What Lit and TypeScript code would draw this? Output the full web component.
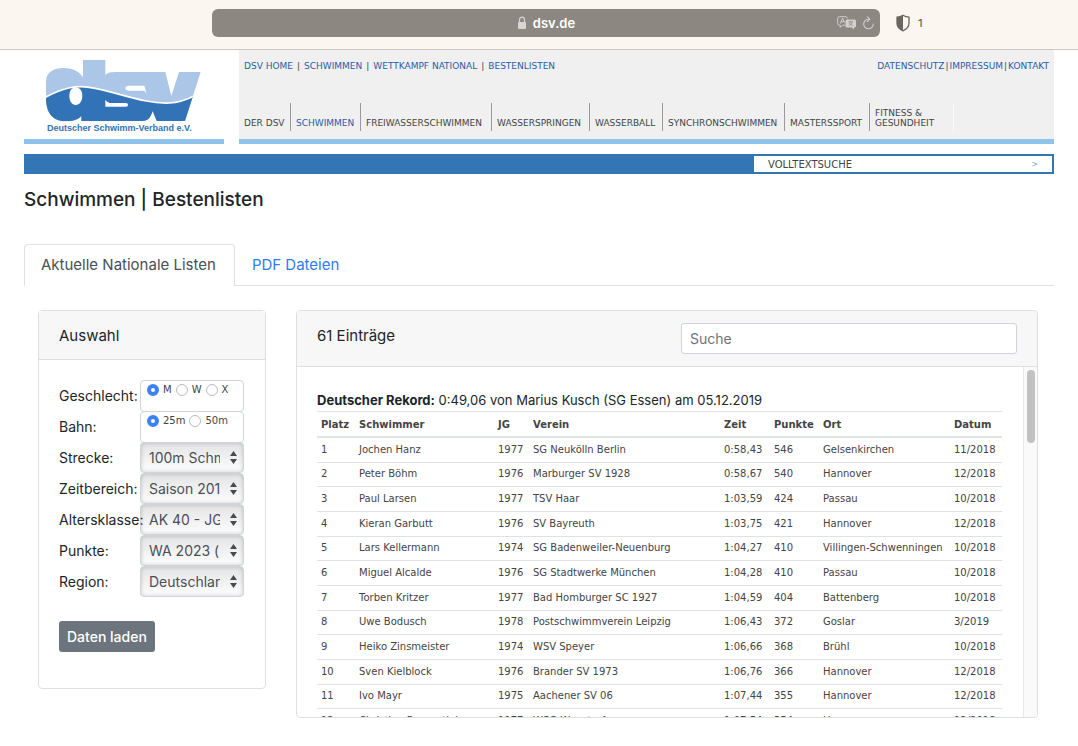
import { LitElement, html, css, svg } from "lit";
import { customElement, state } from "lit/decorators.js";
import { classMap } from "lit/directives/class-map.js";

type Row = [number, string, number, string, string, number, string, string];

const ROWS: Row[] = [
  [1, "Jochen Hanz", 1977, "SG Neukölln Berlin", "0:58,43", 546, "Gelsenkirchen", "11/2018"],
  [2, "Peter Böhm", 1976, "Marburger SV 1928", "0:58,67", 540, "Hannover", "12/2018"],
  [3, "Paul Larsen", 1977, "TSV Haar", "1:03,59", 424, "Passau", "10/2018"],
  [4, "Kieran Garbutt", 1976, "SV Bayreuth", "1:03,75", 421, "Hannover", "12/2018"],
  [5, "Lars Kellermann", 1974, "SG Badenweiler-Neuenburg", "1:04,27", 410, "Villingen-Schwenningen", "10/2018"],
  [6, "Miguel Alcalde", 1976, "SG Stadtwerke München", "1:04,28", 410, "Passau", "10/2018"],
  [7, "Torben Kritzer", 1977, "Bad Homburger SC 1927", "1:04,59", 404, "Battenberg", "10/2018"],
  [8, "Uwe Bodusch", 1978, "Postschwimmverein Leipzig", "1:06,43", 372, "Goslar", "3/2019"],
  [9, "Heiko Zinsmeister", 1974, "WSV Speyer", "1:06,66", 368, "Brühl", "10/2018"],
  [10, "Sven Kielblock", 1976, "Brander SV 1973", "1:06,76", 366, "Hannover", "12/2018"],
  [11, "Ivo Mayr", 1975, "Aachener SV 06", "1:07,44", 355, "Hannover", "12/2018"],
  [12, "Christian Rosenstiel", 1977, "WSG Wunstorf", "1:07,54", 354, "Hannover", "12/2018"],
];

const COLUMNS = ["Platz", "Schwimmer", "JG", "Verein", "Zeit", "Punkte", "Ort", "Datum"];
const CRUMBS = ["DSV HOME", "SCHWIMMEN", "WETTKAMPF NATIONAL", "BESTENLISTEN"];
const SERVICE = ["DATENSCHUTZ", "IMPRESSUM", "KONTAKT"];
const NAV = [
  "DER DSV", "SCHWIMMEN", "FREIWASSERSCHWIMMEN", "WASSERSPRINGEN",
  "WASSERBALL", "SYNCHRONSCHWIMMEN", "MASTERSSPORT", "FITNESS & GESUNDHEIT",
];
const SELECTS = [
  { id: "strecke", label: "Strecke:", value: "100m Schmetterling" },
  { id: "zeit", label: "Zeitbereich:", value: "Saison 2018/2019" },
  { id: "ak", label: "Altersklasse:", value: "AK 40 - JG 1978-1974" },
  { id: "punkte", label: "Punkte:", value: "WA 2023 (25m)" },
  { id: "region", label: "Region:", value: "Deutschland" },
];

@customElement("browser-bar")
class BrowserBar extends LitElement {
  static styles = css`
    :host {
      display: grid;
      grid-template-columns: 212fr 668fr 198fr;
      align-items: center;
      height: 49px;
      padding-bottom: 3px;
      box-sizing: border-box;
      background: #fcf6f1;
      box-shadow: 0 1px #cbc7c4;
      margin-bottom: 1px;
      font-family: Inter, sans-serif;
    }
    .address {
      grid-column: 2;
      display: grid;
      grid-template-columns: 1fr auto 1fr;
      align-items: center;
      height: 28px;
      padding: 0 5px;
      border-radius: 6px;
      background: #8d8781;
      color: #fff;
      font-size: 13px;
      font-weight: 600;
    }
    .site { grid-column: 2; display: flex; align-items: center; gap: 6px; }
    .tools { display: flex; justify-content: flex-end; align-items: center; gap: 5px; }
    .shield { display: flex; align-items: center; gap: 7px; padding-left: 15px; font-size: 11px; font-weight: 500; color: #6b6660; }
    svg { display: block; }
  `;

  render() {
    return html`
      <div class="address">
        <span class="site">
          <svg width="10" height="14" viewBox="0 0 10 14">
            <path d="M2.500 6.500V4a2.500 2.800 0 0 1 5 0v2.500" fill="none" stroke="#d8d5d2" stroke-width="1.200" />
            <rect x="1" y="6" width="8" height="7" rx="1" fill="#d8d5d2" />
          </svg>
          dsv.de
        </span>
        <span class="tools">
          <svg width="20" height="14" viewBox="0 0 20 14">
            <path d="M8 9.200H5.500L3.200 11.500V9.200H2.500A1.800 1.800 0 0 1 .7 7.400V2.500A1.800 1.800 0 0 1 2.500.7h6A1.800 1.800 0 0 1 10.300 2.500" fill="none" stroke="#d2cfcc" />
            <path d="M3.300 7.500 5.600 2.200 7.600 6.500M4.100 5.800h3" fill="none" stroke="#d2cfcc" />
            <path d="M10 3.500h7.500A1.500 1.500 0 0 1 19 5v5a1.500 1.500 0 0 1-1.500 1.500H17V13.500L14.800 11.500H10A1.500 1.500 0 0 1 8.500 10V5A1.500 1.500 0 0 1 10 3.500Z" fill="#d2cfcc" />
            <path d="M11.500 5.800h4.500M13.700 4.800v1M12.200 6.300c.6 1.500 1.600 2.500 3.500 3.200M15.200 6.300c-.6 1.500-1.600 2.500-3.500 3.200" fill="none" stroke="#8d8781" stroke-width=".8" />
          </svg>
          <svg width="13" height="14" viewBox="0 0 13 14">
            <path d="M6.500 3.200A4.800 4.800 0 1 0 11.300 8" fill="none" stroke="#d2cfcc" stroke-width="1.100" stroke-linecap="round" />
            <path d="M5.300.8 7.700 3.200 5.300 5.600" fill="none" stroke="#d2cfcc" stroke-width="1.100" stroke-linecap="round" stroke-linejoin="round" />
          </svg>
        </span>
      </div>
      <div class="shield">
        <svg width="16" height="18" viewBox="0 0 16 18">
          <path d="M8 1.200c1.800 1.300 3.800 1.900 6 2v6c0 3.500-2.500 6-6 7.600-3.500-1.600-6-4.100-6-7.600v-6c2.200-.1 4.200-.7 6-2Z" fill="none" stroke="#6b6660" stroke-width="1.300" />
          <path d="M8 1.200v15.600c-3.500-1.600-6-4.100-6-7.600v-6c2.200-.1 4.200-.7 6-2Z" fill="#6b6660" />
        </svg>
        1
      </div>
    `;
  }
}

@customElement("site-header")
class SiteHeader extends LitElement {
  static styles = css`
    :host { display: block; padding: 0 24px; font-family: Verdana, "DejaVu Sans", sans-serif; font-size: 9px; color: #444; }
    .top { display: grid; grid-template-columns: 200px 1fr; gap: 15px; }
    .brand { padding-left: 12px; border-bottom: 5px solid #90c3ea; }
    .brand svg { display: block; }
    .claim { margin: 0 0 0 11px; font: bold 9px/12px "Liberation Sans", Arial, sans-serif; color: #3173b6; white-space: nowrap; }
    .menu { display: flex; flex-direction: column; justify-content: space-between; height: 89px; padding-bottom: 8px; box-sizing: border-box; background: #f0f0f0; }
    .menu-wrap { border-bottom: 5px solid #90c3ea; }
    .line { display: flex; justify-content: space-between; padding: 10px 5px 0; line-height: 12px; }
    .crumbs { display: flex; gap: 4px; }
    .service { display: flex; gap: 1px; }
    a { color: #2a5caa; text-decoration: none; }
    nav { display: grid; grid-template-columns: 52fr 70fr 131fr 98fr 73fr 122fr 85fr 84fr 100fr; }
    .item { display: flex; align-items: flex-end; height: 28px; padding: 0 2px 3px 5px; box-sizing: border-box; line-height: 10px; border-right: 1px solid #999; }
    .item a { color: #444; }
    .item.active a { color: #2a5caa; }
    .item:last-child { border-right-color: #fafafa; }
    .bar { display: flex; justify-content: flex-end; margin-top: 10px; background: #3276b5; }
    .search { display: flex; width: 300px; height: 20px; box-sizing: border-box; padding-left: 14px; border: 2px solid #3276b5; border-left-width: 0; background: #fff; }
    .search input { flex: 1; min-width: 0; padding: 0; border: 0; outline: 0; background: none; font: 10px Verdana, "DejaVu Sans", sans-serif; }
    .search input::placeholder { color: #444; opacity: 1; }
    .search button { padding: 0 14px; border: 0; background: none; color: #7aa9d6; font: 8px "DejaVu Sans", sans-serif; }
  `;

  render() {
    const body =
      "M30 140V95C30 68 50 54 84 54C108 54 128 62 141 82V29H208V75C214 68 224 66 238 66H388L406 138L429 66H494L447 213H362L350 183C344 203 336 213 320 213H136V198C124 211 108 214 88 214C48 214 30 186 30 145Z";
    const wave = "C80 114 118 105 160 112C240 124 320 162 400 159C430 157 452 149 476 137";
    return html`
      <div class="top">
        <div class="brand">
          <svg width="180" height="72" viewBox="0 0 540 216" role="img" aria-label="dsv">
            <defs><clipPath id="letters"><path d=${body} /></clipPath></defs>
            <g clip-path="url(#letters)">
              ${svg`
                <rect width="540" height="216" fill="#abc6e6" />
                <path d=${`M28 142${wave}V216H28Z`} fill="#3173b6" />
                <path d=${`M28 142${wave}`} fill="none" stroke="#fff" stroke-width="5" />
              `}
            </g>
            <path d="M119 112C132 112 139 124 139 138C139 152 131 165 119 165S100 152 100 138C100 124 107 112 119 112Z" fill="#fff" />
            <path d="M277 107H325L332 131L325 122H278Q268 121 268 115Q268 107 277 107Z" fill="#fff" />
            <path d="M208 149Q214 159 228 159H270Q276 159 276 165Q276 170 270 170H208Z" fill="#fff" />
          </svg>
          <p class="claim">Deutscher Schwimm-Verband e.V.</p>
        </div>
        <div class="menu-wrap">
          <div class="menu">
            <div class="line">
              <div class="crumbs">${CRUMBS.map((c, i) => html`${i ? html`<span>|</span>` : ""}<a href="#">${c}</a>`)}</div>
              <div class="service">${SERVICE.map((c, i) => html`${i ? html`<span>|</span>` : ""}<a href="#">${c}</a>`)}</div>
            </div>
            <nav>
              ${NAV.map((n, i) => html`<div class=${classMap({ item: true, active: i === 1 })}><a href="#">${n}</a></div>`)}
            </nav>
          </div>
        </div>
      </div>
      <div class="bar">
        <form class="search" @submit=${(e: Event) => e.preventDefault()}>
          <input type="text" aria-label="Volltextsuche" placeholder="VOLLTEXTSUCHE" />
          <button>&gt;</button>
        </form>
      </div>
    `;
  }
}

@customElement("filter-card")
class FilterCard extends LitElement {
  static styles = css`
    :host { display: block; border: 1px solid #dfdfdf; border-radius: 4px; background: #fff; }
    * { box-sizing: border-box; }
    h2 { margin: 0; padding: 12px 20px 10px; font-size: 15px; line-height: 26px; font-weight: 400; background: #f7f7f7; border-bottom: 1px solid #dfdfdf; }
    form { padding: 20px 21px 36px 20px; }
    .row { display: grid; grid-template-columns: 81px 1fr; height: 31px; font-size: 14px; line-height: 32px; white-space: nowrap; }
    .name { position: relative; z-index: 1; }
    .box { position: relative; min-width: 0; }
    .radios { display: flex; align-items: flex-start; padding: 2px 0 0 6px; border: 1px solid #ced4da; border-radius: 4px; font: 10px/14px Verdana, "DejaVu Sans", sans-serif; color: #444; }
    .radios label { display: flex; align-items: center; gap: 4px; margin-right: 4px; }
    .radios input { appearance: none; width: 12px; height: 12px; margin: 0; border: 1px solid #bbb; border-radius: 50%; background: #fff; }
    .radios input:checked { border: 4px solid #3b82f6; }
    select { appearance: none; width: 100%; height: 31px; margin: 0; padding: 0 23px 0 8px; border: 1px solid #ced4da; border-radius: 4px; background: linear-gradient(#e4e4e4, #fdfdfd); box-shadow: inset 0 0 4px rgba(0, 0, 0, 0.2); color: #495057; font: 14px Inter, sans-serif; }
    .arrows { position: absolute; right: 7px; top: 9px; pointer-events: none; }
    button { height: 31px; margin-top: 24px; padding: 0 8px; border: 0; border-radius: 3px; background: #6c757d; color: #fff; font: 500 14px Inter, sans-serif; display: block; }
  `;

  private radios(name: string, label: string, options: string[]) {
    return html`
      <div class="row" role="radiogroup" aria-label=${label}>
        <span class="name">${label}</span>
        <div class="box radios">
          ${options.map((o, i) => html`<label><input type="radio" name=${name} ?checked=${i === 0} />${o}</label>`)}
        </div>
      </div>
    `;
  }

  render() {
    return html`
      <h2>Auswahl</h2>
      <form @submit=${(e: Event) => e.preventDefault()}>
        ${this.radios("geschlecht", "Geschlecht:", ["M", "W", "X"])}
        ${this.radios("bahn", "Bahn:", ["25m", "50m"])}
        ${SELECTS.map(
          (s) => html`
            <div class="row">
              <label class="name" for=${s.id}>${s.label}</label>
              <div class="box">
                <select id=${s.id}><option>${s.value}</option></select>
                <svg class="arrows" width="7" height="13" viewBox="0 0 7 13">
                  <path d="M3.500 0 7 5H0ZM0 8H7L3.500 13Z" fill="#454b52" />
                </svg>
              </div>
            </div>
          `
        )}
        <button>Daten laden</button>
      </form>
    `;
  }
}

@customElement("result-card")
class ResultCard extends LitElement {
  @state() private query = "";

  static styles = css`
    :host { display: block; border: 1px solid #dfdfdf; border-radius: 4px; background: #fff; overflow: hidden; }
    * { box-sizing: border-box; }
    .head { display: flex; justify-content: space-between; align-items: flex-start; padding: 12px 20px; background: #f7f7f7; border-bottom: 1px solid #dfdfdf; }
    h2 { margin: 0; font-size: 15px; line-height: 26px; font-weight: 400; }
    .head input { width: 48%; height: 31px; padding: 0 8px; border: 1px solid #ced4da; border-radius: 3px; font: 14px Inter, sans-serif; color: #495057; }
    .head input::placeholder { color: #6c757d; opacity: 1; }
    .panel { display: grid; grid-template-columns: 1fr 14px; height: 350px; }
    .body { overflow: hidden; padding: 24px 21px 0 20px; }
    .record { margin: 0 0 2px; font-size: 13px; line-height: 18px; }
    .track { padding: 3px; background: #fafafa; border-left: 1px solid #e8e8e8; }
    .thumb { width: 8px; height: 73px; border-radius: 4px; background: #c2c2c2; }
    table { width: 100%; height: 323px; table-layout: fixed; border-collapse: separate; border-spacing: 0; font: 10px/12px Verdana, "DejaVu Sans", sans-serif; color: #444; white-space: nowrap; }
    th, td { padding: 0 0 0 4px; text-align: left; border-bottom: 1px solid #dee2e6; }
    th { height: 27px; padding-top: 2px; border-top: 1px solid #dee2e6; border-bottom-width: 2px; }
    .platz { width: 38px; }
    .schwimmer { width: 139px; }
    .jg { width: 35px; }
    .zeit { width: 50px; }
    .punkte { width: 49px; }
    .ort { width: 131px; }
    .datum { width: 52px; }
  `;

  render() {
    const q = this.query.toLowerCase();
    const rows = ROWS.filter((r) => r.join(" ").toLowerCase().includes(q));
    return html`
      <div class="head">
        <h2>61 Einträge</h2>
        <input
          type="text"
          placeholder="Suche"
          aria-label="Suche"
          @input=${(e: Event) => (this.query = (e.target as HTMLInputElement).value)}
        />
      </div>
      <div class="panel">
        <div class="body">
          <p class="record"><b>Deutscher Rekord:</b> 0:49,06 von Marius Kusch (SG Essen) am 05.12.2019</p>
          <table>
            <thead>
              <tr>${COLUMNS.map((c) => html`<th class=${c.toLowerCase()}>${c}</th>`)}</tr>
            </thead>
            <tbody>
              ${rows.map((r) => html`<tr>${r.map((v) => html`<td>${v}</td>`)}</tr>`)}
            </tbody>
          </table>
        </div>
        <div class="track"><div class="thumb"></div></div>
      </div>
    `;
  }
}

@customElement("app-root")
class AppRoot extends LitElement {
  static styles = css`
    :host { display: block; min-height: 100vh; background: #fff; color: #212529; font-family: Inter, sans-serif; }
    h1 { margin: 14px 24px 0; font-size: 19px; line-height: 24px; font-weight: 500; }
    .tabs { display: flex; margin: 32px 24px 24px; box-shadow: inset 0 -1px #dee2e6; font-size: 15px; line-height: 24px; }
    .tab { padding: 8px 18px 8px 16px; border: 1px solid transparent; border-radius: 4px 4px 0 0; color: #2f7bf6; text-decoration: none; }
    .tab.active { border-color: #dee2e6; border-bottom-color: #fff; background: #fff; color: #495057; }
    .content { display: grid; grid-template-columns: minmax(0, 228fr) minmax(0, 742fr); align-items: start; gap: 30px; padding: 0 40px 24px 38px; }
  `;

  render() {
    return html`
      <browser-bar></browser-bar>
      <site-header></site-header>
      <h1>Schwimmen | Bestenlisten</h1>
      <div class="tabs">
        <a class="tab active" href="#">Aktuelle Nationale Listen</a>
        <a class="tab" href="#">PDF Dateien</a>
      </div>
      <div class="content">
        <filter-card></filter-card>
        <result-card></result-card>
      </div>
    `;
  }
}
